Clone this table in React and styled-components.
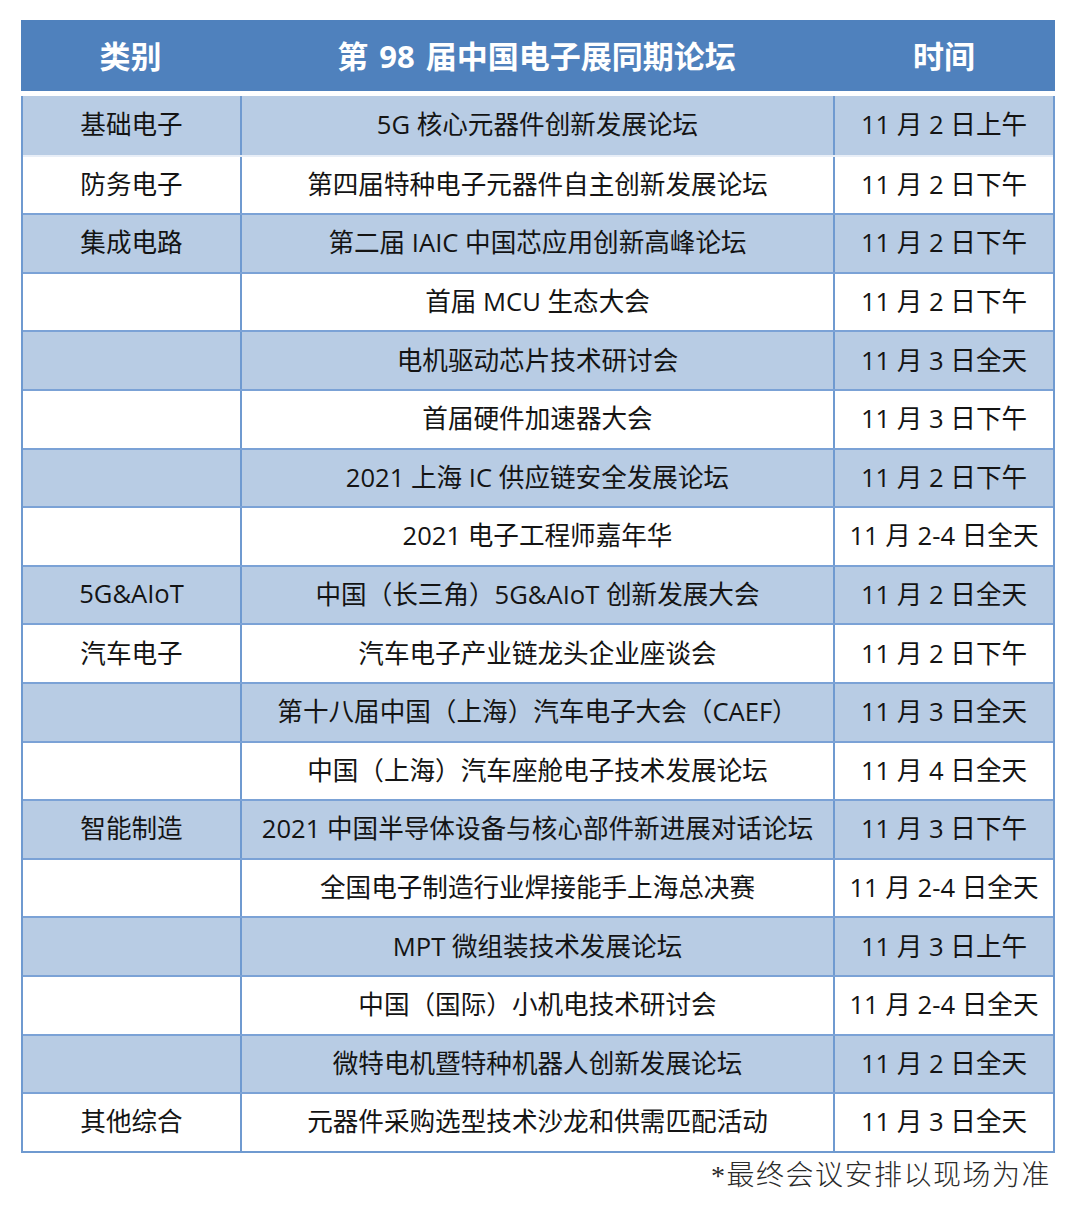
import React from 'react';
import styled, { createGlobalStyle } from 'styled-components';

const GlobalStyle = createGlobalStyle`
  body {
    margin: 0;
    background: #ffffff;
    font-family: "Open Sans", "Noto Sans CJK SC", sans-serif;
  }
`;

const rows = [
  { cat: '基础电子', name: '5G 核心元器件创新发展论坛', time: '11 月 2 日上午' },
  { cat: '防务电子', name: '第四届特种电子元器件自主创新发展论坛', time: '11 月 2 日下午' },
  { cat: '集成电路', name: '第二届 IAIC 中国芯应用创新高峰论坛', time: '11 月 2 日下午' },
  { cat: '', name: '首届 MCU 生态大会', time: '11 月 2 日下午' },
  { cat: '', name: '电机驱动芯片技术研讨会', time: '11 月 3 日全天' },
  { cat: '', name: '首届硬件加速器大会', time: '11 月 3 日下午' },
  { cat: '', name: '2021 上海 IC 供应链安全发展论坛', time: '11 月 2 日下午' },
  { cat: '', name: '2021 电子工程师嘉年华', time: '11 月 2-4 日全天' },
  { cat: '5G&AIoT', name: '中国（长三角）5G&AIoT 创新发展大会', time: '11 月 2 日全天' },
  { cat: '汽车电子', name: '汽车电子产业链龙头企业座谈会', time: '11 月 2 日下午' },
  { cat: '', name: '第十八届中国（上海）汽车电子大会（CAEF）', time: '11 月 3 日全天' },
  { cat: '', name: '中国（上海）汽车座舱电子技术发展论坛', time: '11 月 4 日全天' },
  { cat: '智能制造', name: '2021 中国半导体设备与核心部件新进展对话论坛', time: '11 月 3 日下午' },
  { cat: '', name: '全国电子制造行业焊接能手上海总决赛', time: '11 月 2-4 日全天' },
  { cat: '', name: 'MPT 微组装技术发展论坛', time: '11 月 3 日上午' },
  { cat: '', name: '中国（国际）小机电技术研讨会', time: '11 月 2-4 日全天' },
  { cat: '', name: '微特电机暨特种机器人创新发展论坛', time: '11 月 2 日全天' },
  { cat: '其他综合', name: '元器件采购选型技术沙龙和供需匹配活动', time: '11 月 3 日全天' },
];

const Page = styled.div`
  padding: 20px 0 0 21px;
  width: 1034px;
`;

const Table = styled.div`
  display: flex;
  flex-direction: column;
  border-left: 2px solid #6f9ad0;
  border-right: 2px solid #6f9ad0;
  border-bottom: 2px solid #6f9ad0;
  box-sizing: border-box;
`;

const Grid = styled.div`
  display: grid;
  grid-template-columns: 217px 593px 1fr;
`;

const HeaderRow = styled(Grid)`
  height: 71px;
  background: #4f81bd;
  border-bottom: 5px solid #ffffff;
  margin: 0 -2px;
  grid-template-columns: 219px 593px 1fr;
`;

const HeadCell = styled.div`
  display: flex;
  align-items: center;
  justify-content: center;
  color: #ffffff;
  font-size: 31px;
  font-weight: 700;
  word-spacing: 3px;
  padding-bottom: 2px;
`;

const Row = styled(Grid)`
  height: 58.6px;
  box-sizing: border-box;
  background: ${(p) => (p.shaded ? '#b8cce4' : '#ffffff')};
  border-top: ${(p) => (p.first ? 'none' : `2px solid ${p.whiteTop ? '#e8eef7' : '#7ba2d6'}`)};
`;

const Cell = styled.div`
  display: flex;
  align-items: center;
  justify-content: center;
  box-sizing: border-box;
  font-size: 25.6px;
  color: #141414;
  white-space: nowrap;
  border-left: ${(p) => (p.divided ? '2px solid #6f9ad0' : 'none')};
  padding-bottom: 4px;
`;

const Note = styled.div`
  text-align: right;
  padding: 0 4px 2px 0;
  font-family: "Liberation Serif", "Noto Sans CJK SC", serif;
  font-weight: 300;
  font-size: 28px;
  letter-spacing: 1.5px;
  color: #2a2a2a;
`;

export default function App() {
  return (
    <>
      <GlobalStyle />
      <Page>
        <Table>
          <HeaderRow>
            <HeadCell>类别</HeadCell>
            <HeadCell>第 98 届中国电子展同期论坛</HeadCell>
            <HeadCell>时间</HeadCell>
          </HeaderRow>
          {rows.map((r, i) => (
            <Row key={i} shaded={i % 2 === 0} first={i === 0} whiteTop={i === 1}>
              <Cell>{r.cat}</Cell>
              <Cell divided>{r.name}</Cell>
              <Cell divided>{r.time}</Cell>
            </Row>
          ))}
        </Table>
        <Note>*最终会议安排以现场为准</Note>
      </Page>
    </>
  );
}
